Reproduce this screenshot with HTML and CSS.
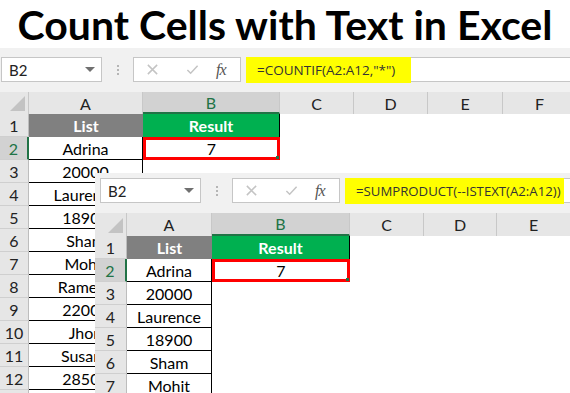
FILE: index.html
```html
<!DOCTYPE html>
<html lang="en">
<head>
    <meta charset="UTF-8">
    <meta name="viewport" content="width=device-width, initial-scale=1.0">
    <title>Count Cells with Text in Excel</title>
    <link rel="stylesheet" href="styles.css">
</head>
<body>
    <h1 class="title">Count Cells with Text in Excel</h1>

    <div class="sheet sheet-main">
        <div class="toolbar">
            <div class="namebox"><span>B2</span><span class="caret"></span></div>
            <div class="grip"><span></span><span></span><span></span></div>
            <div class="fx-box">
                <svg class="btn-icon icon-x" viewBox="0 0 14 14"><path d="M2 2L12 12M12 2L2 12" /></svg>
                <svg class="btn-icon icon-ok" viewBox="0 0 14 14"><path d="M1.5 7.5L5 11L12.5 3" /></svg>
                <span class="fx">fx</span>
            </div>
            <div class="formula"><span class="hl">=COUNTIF(A2:A12,"*")</span></div>
        </div>
        <div class="grid grid-main">
            <div class="corner"></div>
            <div class="colhead">A</div>
            <div class="colhead sel">B</div>
            <div class="colhead">C</div>
            <div class="colhead">D</div>
            <div class="colhead">E</div>
            <div class="colhead">F</div>

            <div class="rowhead">1</div><div class="cell th-list">List</div><div class="cell th-result">Result</div><div class="cell"></div><div class="cell"></div><div class="cell"></div><div class="cell"></div>
            <div class="rowhead sel">2</div><div class="cell list">Adrina</div><div class="cell hit">7</div><div class="cell"></div><div class="cell"></div><div class="cell"></div><div class="cell"></div>
            <div class="rowhead">3</div><div class="cell list">20000</div><div class="cell"></div><div class="cell"></div><div class="cell"></div><div class="cell"></div><div class="cell"></div>
            <div class="rowhead">4</div><div class="cell list">Laurence</div><div class="cell"></div><div class="cell"></div><div class="cell"></div><div class="cell"></div><div class="cell"></div>
            <div class="rowhead">5</div><div class="cell list">18900</div><div class="cell"></div><div class="cell"></div><div class="cell"></div><div class="cell"></div><div class="cell"></div>
            <div class="rowhead">6</div><div class="cell list">Sham</div><div class="cell"></div><div class="cell"></div><div class="cell"></div><div class="cell"></div><div class="cell"></div>
            <div class="rowhead">7</div><div class="cell list">Mohit</div><div class="cell"></div><div class="cell"></div><div class="cell"></div><div class="cell"></div><div class="cell"></div>
            <div class="rowhead">8</div><div class="cell list">Ramesh</div><div class="cell"></div><div class="cell"></div><div class="cell"></div><div class="cell"></div><div class="cell"></div>
            <div class="rowhead">9</div><div class="cell list">22000</div><div class="cell"></div><div class="cell"></div><div class="cell"></div><div class="cell"></div><div class="cell"></div>
            <div class="rowhead">10</div><div class="cell list">Jhon</div><div class="cell"></div><div class="cell"></div><div class="cell"></div><div class="cell"></div><div class="cell"></div>
            <div class="rowhead">11</div><div class="cell list">Susana</div><div class="cell"></div><div class="cell"></div><div class="cell"></div><div class="cell"></div><div class="cell"></div>
            <div class="rowhead">12</div><div class="cell list">28500</div><div class="cell"></div><div class="cell"></div><div class="cell"></div><div class="cell"></div><div class="cell"></div>
            <div class="rowhead"></div><div class="cell list"></div><div class="cell"></div><div class="cell"></div><div class="cell"></div><div class="cell"></div><div class="cell"></div>
        </div>
    </div>

    <!-- second screenshot laid over the first one -->
    <div class="sheet sheet-overlay">
        <div class="toolbar toolbar-small">
            <div class="namebox"><span>B2</span><span class="caret"></span></div>
            <div class="grip"><span></span><span></span><span></span></div>
            <div class="fx-box">
                <svg class="btn-icon icon-x" viewBox="0 0 14 14"><path d="M2 2L12 12M12 2L2 12" /></svg>
                <svg class="btn-icon icon-ok" viewBox="0 0 14 14"><path d="M1.5 7.5L5 11L12.5 3" /></svg>
                <span class="fx">fx</span>
            </div>
            <div class="formula"><span class="hl hl-long">=SUMPRODUCT(--ISTEXT(A2:A12))</span></div>
        </div>
        <div class="grid grid-overlay">
            <div class="corner"></div>
            <div class="colhead">A</div>
            <div class="colhead sel">B</div>
            <div class="colhead">C</div>
            <div class="colhead">D</div>
            <div class="colhead">E</div>

            <div class="rowhead">1</div><div class="cell th-list">List</div><div class="cell th-result">Result</div><div class="cell"></div><div class="cell"></div><div class="cell"></div>
            <div class="rowhead sel">2</div><div class="cell list">Adrina</div><div class="cell hit">7</div><div class="cell"></div><div class="cell"></div><div class="cell"></div>
            <div class="rowhead">3</div><div class="cell list">20000</div><div class="cell"></div><div class="cell"></div><div class="cell"></div><div class="cell"></div>
            <div class="rowhead">4</div><div class="cell list">Laurence</div><div class="cell"></div><div class="cell"></div><div class="cell"></div><div class="cell"></div>
            <div class="rowhead">5</div><div class="cell list">18900</div><div class="cell"></div><div class="cell"></div><div class="cell"></div><div class="cell"></div>
            <div class="rowhead">6</div><div class="cell list">Sham</div><div class="cell"></div><div class="cell"></div><div class="cell"></div><div class="cell"></div>
            <div class="rowhead">7</div><div class="cell list">Mohit</div><div class="cell"></div><div class="cell"></div><div class="cell"></div><div class="cell"></div>
        </div>
    </div>
</body>
</html>
```

FILE: styles.css
```css
body {
    margin: 0;
    width: 570px;
    height: 393px;
    overflow: hidden;
    position: relative;
    background: #fff;
    font-family: Lato, "Open Sans", sans-serif;
    color: #000;
}
.title {
    margin: 0;
    height: 48px;
    line-height: 50px;
    font-size: 41px;
    font-weight: 700;
    text-align: center;
    white-space: nowrap;
}

/* formula bar */
.toolbar {
    display: flex;
    align-items: flex-start;
    height: 44px;
    padding: 9px 0 0 1px;
    box-sizing: border-box;
    background: #f1f1f1;
    overflow: hidden;
}
.toolbar-small {
    height: 40px;
    padding: 5px 0 0 5px;
}
.namebox {
    width: 101px;
    height: 25px;
    flex-shrink: 0;
    box-sizing: border-box;
    border: 1px solid #c6c6c6;
    background: #fff;
    display: flex;
    align-items: center;
    justify-content: space-between;
    padding: 0 6px 0 7px;
    font-size: 15px;
    color: #222;
}
.caret {
    width: 0;
    height: 0;
    border-left: 5px solid transparent;
    border-right: 5px solid transparent;
    border-top: 5px solid #707070;
}
.grip {
    width: 31px;
    height: 25px;
    flex-shrink: 0;
    display: flex;
    flex-direction: column;
    align-items: center;
    justify-content: center;
    gap: 2px;
}
.grip span {
    width: 2px;
    height: 2px;
    background: #b5b5b5;
}
.fx-box {
    width: 108px;
    height: 25px;
    flex-shrink: 0;
    box-sizing: border-box;
    border: 1px solid #c6c6c6;
    background: #fff;
    display: flex;
    align-items: center;
    padding-left: 12px;
}
.btn-icon {
    width: 13px;
    height: 13px;
    fill: none;
    stroke: #c4c4c4;
    stroke-width: 1.6;
}
.icon-ok {
    margin-left: 27px;
}
.fx {
    margin-left: 17px;
    font-family: "Liberation Serif", serif;
    font-style: italic;
    font-size: 16px;
    color: #555;
    letter-spacing: -1px;
}
.formula {
    flex: 1;
    min-width: 0;
    height: 25px;
    margin-left: 5px;
    box-sizing: border-box;
    border-top: 1px solid #c6c6c6;
    border-bottom: 1px solid #c6c6c6;
    background: #fff;
    display: flex;
    align-items: stretch;
}
.hl {
    background: #ffff00;
    margin: -1px 0 -2px;
    padding: 0 16px 0 11px;
    display: flex;
    align-items: center;
    flex-shrink: 0;
    white-space: nowrap;
    font-family: "Open Sans", sans-serif;
    font-size: 13.5px;
    color: #333;
}
.hl-long {
    padding: 0 3px 0 11px;
    font-size: 13.2px;
}

/* grid */
.grid {
    display: grid;
    grid-template-rows: 22px;
    grid-auto-rows: 23px;
    font-size: 16px;
}
.grid-main {
    grid-template-columns: 29px 114px 137px 74px 74px 75px 74px;
}
.grid-overlay {
    grid-template-rows: 23px;
    grid-template-columns: 32px 85px 138px 74px 73px 74px;
}
.corner {
    background: #e6e6e6;
    border-right: 1px solid #c8c8c8;
    position: relative;
}
.corner::after {
    content: "";
    position: absolute;
    right: 3px;
    bottom: 3px;
    border-left: 15px solid transparent;
    border-bottom: 15px solid #c3c3c3;
}
.colhead {
    background: #e6e6e6;
    border-right: 1px solid #c8c8c8;
    display: flex;
    align-items: center;
    justify-content: center;
    color: #222;
}
.colhead.sel {
    background: #d2d2d2;
    color: #217346;
    border-bottom: 2px solid #217346;
}
.rowhead {
    background: #e6e6e6;
    border-right: 1px solid #bdbdbd;
    border-bottom: 1px solid #cfcfcf;
    display: flex;
    align-items: center;
    justify-content: center;
    color: #222;
}
.rowhead.sel {
    background: #d2d2d2;
    color: #217346;
    border-right: 2px solid #217346;
}
.cell {
    display: flex;
    align-items: center;
    justify-content: center;
    white-space: nowrap;
    overflow: hidden;
    background: #fff;
}
.list {
    border-right: 1px solid #000;
    border-bottom: 1px solid #000;
}
.th-list {
    background: #808080;
    color: #fff;
    font-weight: 700;
}
.th-result {
    background: #00b050;
    color: #fff;
    font-weight: 700;
    border-right: 1px solid #000;
}
.hit {
    border: 3px solid #ff0000;
    position: relative;
    overflow: visible;
}
.hit::after {
    content: "";
    position: absolute;
    right: -2px;
    bottom: -2px;
    width: 3px;
    height: 3px;
    background: #217346;
}

.sheet-overlay {
    position: absolute;
    left: 95px;
    top: 173px;
    width: 475px;
    height: 220px;
    background: #fff;
}
```
